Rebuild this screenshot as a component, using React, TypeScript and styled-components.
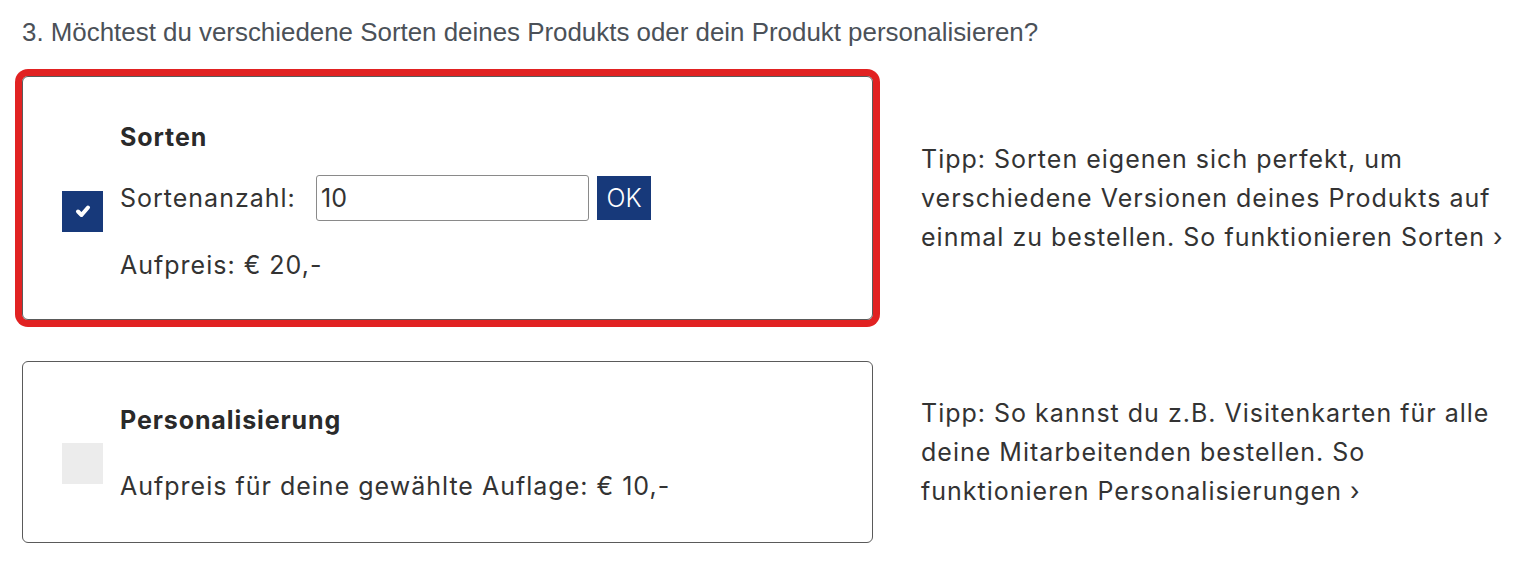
import React from "react";
import styled, { createGlobalStyle } from "styled-components";

const GlobalStyle = createGlobalStyle`
  html, body {
    margin: 0;
    padding: 0;
    background: #ffffff;
  }
  body {
    font-family: "Inter", "Open Sans", sans-serif;
    color: #333333;
  }
`;

const Page = styled.div`
  padding: 14px 22px 0 22px;
  display: flex;
  flex-direction: column;
`;

const Question = styled.h3`
  margin: 0;
  font-family: "Liberation Sans", Arial, sans-serif;
  font-weight: 400;
  font-size: 25.9px;
  line-height: 36px;
  color: #4b5158;
`;

const OptionList = styled.div`
  display: flex;
  flex-direction: column;
  gap: 41px;
  margin-top: 26px;
`;

const OptionRow = styled.div`
  display: flex;
  align-items: center;
  gap: 48px;
`;

const Card = styled.div<{ $selected?: boolean; $padTop: number; $padBottom: number }>`
  box-sizing: border-box;
  width: 851px;
  flex: none;
  display: flex;
  align-items: center;
  gap: 17px;
  padding: ${(p) => p.$padTop}px 20px ${(p) => p.$padBottom}px 39px;
  border: 1px solid #5a5a5a;
  border-radius: 6px;
  box-shadow: ${(p) => (p.$selected ? "0 0 0 7px #e12222" : "none")};
`;

const Box = styled.span<{ $checked?: boolean }>`
  width: 41px;
  height: 41px;
  flex: none;
  margin-top: 20px;
  display: flex;
  align-items: center;
  justify-content: center;
  background: ${(p) => (p.$checked ? "#17397a" : "#ececec")};
`;

const Body = styled.div`
  display: flex;
  flex-direction: column;
`;

const Title = styled.div`
  font-weight: 700;
  font-size: 25px;
  line-height: 36px;
  color: #2a2a2a;
  letter-spacing: 0.9px;
`;

const Line = styled.div<{ $gap: number }>`
  font-size: 25px;
  line-height: 36px;
  margin-top: ${(p) => p.$gap}px;
  color: #333333;
  letter-spacing: 1px;
`;

const InputRow = styled.div`
  display: flex;
  align-items: center;
  margin-top: 20px;
  height: 46px;
`;

const Label = styled.span`
  font-size: 25px;
  letter-spacing: 1px;
  color: #333333;
  width: 196px;
  flex: none;
`;

const CountInput = styled.input`
  box-sizing: border-box;
  width: 273px;
  height: 46px;
  border: 1px solid #8a8a8a;
  border-radius: 3px;
  padding: 0 4px;
  font-family: "Inter", "Open Sans", sans-serif;
  font-size: 25px;
  color: #333333;
  outline: none;
`;

const OkButton = styled.button`
  box-sizing: border-box;
  margin-left: 8px;
  width: 54px;
  height: 44px;
  border: none;
  padding: 0;
  background: #17397a;
  color: #ffffff;
  font-family: "Inter", "Open Sans", sans-serif;
  font-size: 25px;
  font-weight: 300;
  cursor: pointer;
`;

const Tip = styled.p`
  margin: 0;
  width: 592px;
  font-size: 25px;
  line-height: 39px;
  color: #333333;
  letter-spacing: 1px;
`;

const Check = () => (
  <svg width="16" height="14" viewBox="0 0 16 14">
    <polyline
      points="3,7.5 6.5,11 13,3.5"
      fill="none"
      stroke="#ffffff"
      strokeWidth="4"
      strokeLinecap="round"
      strokeLinejoin="round"
    />
  </svg>
);

export default function App() {
  return (
    <>
      <GlobalStyle />
      <Page>
        <Question>
          3. Möchtest du verschiedene Sorten deines Produkts oder dein Produkt personalisieren?
        </Question>
        <OptionList>
          <OptionRow>
            <Card $selected $padTop={42} $padBottom={36}>
              <Box $checked>
                <Check />
              </Box>
              <Body>
                <Title>Sorten</Title>
                <InputRow>
                  <Label>Sortenanzahl:</Label>
                  <CountInput defaultValue="10" />
                  <OkButton>OK</OkButton>
                </InputRow>
                <Line $gap={26}>Aufpreis: € 20,-</Line>
              </Body>
            </Card>
            <Tip>
              Tipp: Sorten eigenen sich perfekt, um verschiedene Versionen deines Produkts auf
              einmal zu bestellen. So funktionieren Sorten ›
            </Tip>
          </OptionRow>
          <OptionRow>
            <Card $padTop={40} $padBottom={38}>
              <Box />
              <Body>
                <Title>Personalisierung</Title>
                <Line $gap={30}>Aufpreis für deine gewählte Auflage: € 10,-</Line>
              </Body>
            </Card>
            <Tip>
              Tipp: So kannst du z.B. Visitenkarten für alle deine Mitarbeitenden bestellen. So
              funktionieren Personalisierungen ›
            </Tip>
          </OptionRow>
        </OptionList>
      </Page>
    </>
  );
}
